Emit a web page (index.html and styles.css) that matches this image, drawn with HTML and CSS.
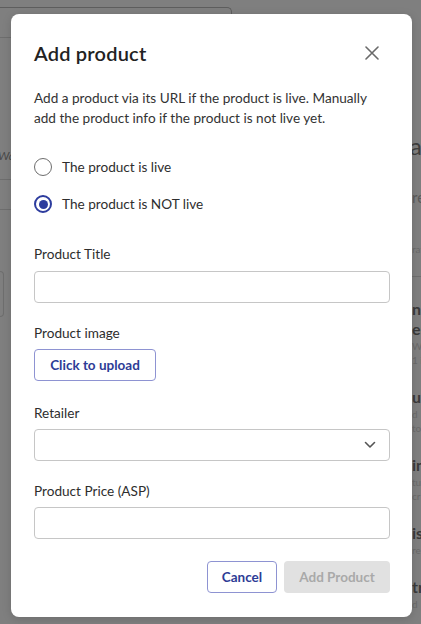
FILE: index.html
```html
<!DOCTYPE html>
<html lang="en">
<head>
<meta charset="utf-8">
<title>Add product</title>
<link rel="stylesheet" href="styles.css">
</head>
<body>
<div class="page">
  <div class="left-col">
    <div class="search-box"></div>
    <div class="rule rule-top"></div>
    <div class="left-item">Walmart</div>
    <div class="rule"></div>
    <div class="rule rule-second"></div>
    <div class="left-card"></div>
  </div>
  <div class="right-col">
    <div class="r-heading">action</div>
    <div class="r-sub">reach</div>
    <div class="r-small">rating</div>
    <div class="r-rule"></div>
    <div class="r-block">
      <div class="r-title">name</div>
      <div class="r-title">error</div>
      <div class="r-small">Week</div>
      <div class="r-small">1 item</div>
    </div>
    <div class="r-block">
      <div class="r-title">ublish</div>
      <div class="r-small">d</div>
      <div class="r-small">to</div>
    </div>
    <div class="r-block">
      <div class="r-title">inter</div>
      <div class="r-small">tu</div>
      <div class="r-small">cr</div>
    </div>
    <div class="r-block">
      <div class="r-title">is</div>
      <div class="r-small">re</div>
    </div>
    <div class="r-block">
      <div class="r-title">tr</div>
      <div class="r-small">d</div>
    </div>
  </div>
</div>

<div class="modal" role="dialog" aria-labelledby="modal-title">
  <div class="modal-header">
    <h2 id="modal-title" class="modal-title">Add product</h2>
    <button class="close-btn" aria-label="Close">
      <svg width="14" height="14" viewBox="0 0 14 14"><path d="M1 1 L13 13 M13 1 L1 13" stroke="#6a6a6a" stroke-width="1.6" fill="none" stroke-linecap="round"/></svg>
    </button>
  </div>
  <p class="modal-desc">Add a product via its URL if the product is live. Manually add the product info if the product is not live yet.</p>

  <div class="radio-group">
    <label class="radio-row"><span class="radio"></span><span>The product is live</span></label>
    <label class="radio-row"><span class="radio checked"></span><span>The product is NOT live</span></label>
  </div>

  <div class="field first-field">
    <div class="field-label">Product Title</div>
    <div class="input"></div>
  </div>
  <div class="field">
    <div class="field-label">Product image</div>
    <button class="upload-btn">Click to upload</button>
  </div>
  <div class="field field-wide">
    <div class="field-label">Retailer</div>
    <div class="input select">
      <svg width="12" height="8" viewBox="0 0 12 8"><path d="M1.5 1.5 L6 6 L10.5 1.5" stroke="#555" stroke-width="1.6" fill="none" stroke-linecap="round" stroke-linejoin="round"/></svg>
    </div>
  </div>
  <div class="field">
    <div class="field-label">Product Price (ASP)</div>
    <div class="input"></div>
  </div>

  <div class="modal-footer">
    <button class="btn btn-outline">Cancel</button>
    <button class="btn btn-disabled" disabled>Add Product</button>
  </div>
</div>
</body>
</html>
```

FILE: styles.css
```css
* { box-sizing: border-box; }
html, body { margin: 0; padding: 0; }
body {
  width: 421px;
  height: 624px;
  overflow: hidden;
  background: #7f7f7f;
  font-family: Lato, "Open Sans", sans-serif;
  position: relative;
}

/* background page (dimmed) */
.page {
  display: flex;
  height: 624px;
}
.left-col {
  width: 232px;
  flex: none;
  padding-top: 7px;
}
.search-box {
  height: 30px;
  margin-left: -10px;
  border: 1px solid #5e5e5e;
  border-bottom: none;
  border-radius: 0 5px 0 0;
}
.rule {
  height: 1px;
  background: #6e6e6e;
  width: 20px;
}
.rule-top { margin-bottom: 110px; }
.left-item {
  font-size: 12px;
  color: #4a4a4a;
  font-style: italic;
  padding: 0 0 16px 0;
  margin-left: -2px;
}
.rule-second { margin-top: 29px; }
.left-card {
  margin-top: 61px;
  width: 4px;
  height: 46px;
  border: 1px solid #6e6e6e;
  border-left: none;
  border-radius: 0 5px 5px 0;
}
.right-col {
  margin-left: auto;
  width: 9px;
  flex: none;
  overflow: hidden;
  white-space: nowrap;
  padding-top: 132px;
  color: #3e3e3e;
}
.r-heading { font-size: 24px; line-height: 28px; margin-left: -2px; }
.r-sub { font-size: 15px; color: #5a5a5a; margin-top: 28px; }
.r-small { font-size: 10px; line-height: 14px; color: #6a6a6a; }
.right-col > .r-small { margin-top: 36px; }
.r-rule { height: 1px; background: #6e6e6e; margin-top: 20px; }
.r-block { margin-top: 22px; }
.r-block + .r-block { margin-top: 20px; }
.r-title { font-size: 16px; line-height: 20px; font-weight: 700; color: #3a3a3a; }

/* modal */
.modal {
  position: absolute;
  left: 11px;
  top: 14px;
  width: 401px;
  height: 603px;
  background: #fff;
  border-radius: 8px;
  box-shadow: 0 2px 10px rgba(0,0,0,0.15);
  padding: 24px 22px 24px 23px;
  color: #2b2b2b;
  display: flex;
  flex-direction: column;
}
.modal-header {
  display: flex;
  align-items: center;
  justify-content: space-between;
  height: 30px;
}
.modal-title {
  margin: 0;
  font-size: 20px;
  font-weight: 600;
  color: #222;
  letter-spacing: 0.2px;
}
.close-btn {
  border: none;
  background: none;
  padding: 0;
  width: 14px;
  height: 14px;
  margin-right: 11px;
  display: flex;
}
.modal-desc {
  margin: 20px 0 0;
  font-size: 13.6px;
  line-height: 20px;
  color: #333;
}
.radio-group {
  display: flex;
  flex-direction: column;
  gap: 17.7px;
  margin-top: 28.5px;
}
.radio-row {
  display: flex;
  align-items: center;
  gap: 10px;
  height: 20px;
  font-size: 13.6px;
  color: #2e2e2e;
}
.radio {
  width: 18px;
  height: 18px;
  border-radius: 50%;
  border: 1.6px solid #6d6d6d;
  display: flex;
  align-items: center;
  justify-content: center;
  flex: none;
}
.radio.checked {
  border: 2px solid #2d3c9e;
}
.radio.checked::after {
  content: "";
  width: 9px;
  height: 9px;
  border-radius: 50%;
  background: #2d3c9e;
}
.field {
  display: flex;
  flex-direction: column;
  align-items: flex-start;
  gap: 6px;
  margin-top: 20px;
}
.first-field { margin-top: 29.5px; gap: 7px; }
.field-wide { margin-top: 22px; }
.field-label {
  font-size: 13.6px;
  line-height: 20px;
  color: #2e2e2e;
}
.input {
  width: 100%;
  height: 32px;
  border: 1px solid #c6c6c6;
  border-radius: 4px;
  background: #fff;
}
.select {
  display: flex;
  align-items: center;
  justify-content: flex-end;
  padding-right: 13px;
}
.upload-btn {
  height: 32px;
  width: 122px;
  border: 1px solid #8e93d2;
  border-radius: 4px;
  background: #fff;
  color: #2d3c96;
  font-family: inherit;
  font-size: 13.5px;
  font-weight: 700;
  padding: 0;
}
.modal-footer {
  display: flex;
  justify-content: flex-end;
  gap: 7px;
  margin-top: 22px;
}
.btn {
  height: 32px;
  border-radius: 4px;
  font-family: inherit;
  font-size: 13.5px;
  font-weight: 700;
  padding: 0;
}
.btn-outline {
  width: 70px;
  border: 1px solid #8e93d2;
  background: #fff;
  color: #2d3c96;
}
.btn-disabled {
  width: 106px;
  border: none;
  background: #e1e1e1;
  color: #a9a9a9;
}
```
